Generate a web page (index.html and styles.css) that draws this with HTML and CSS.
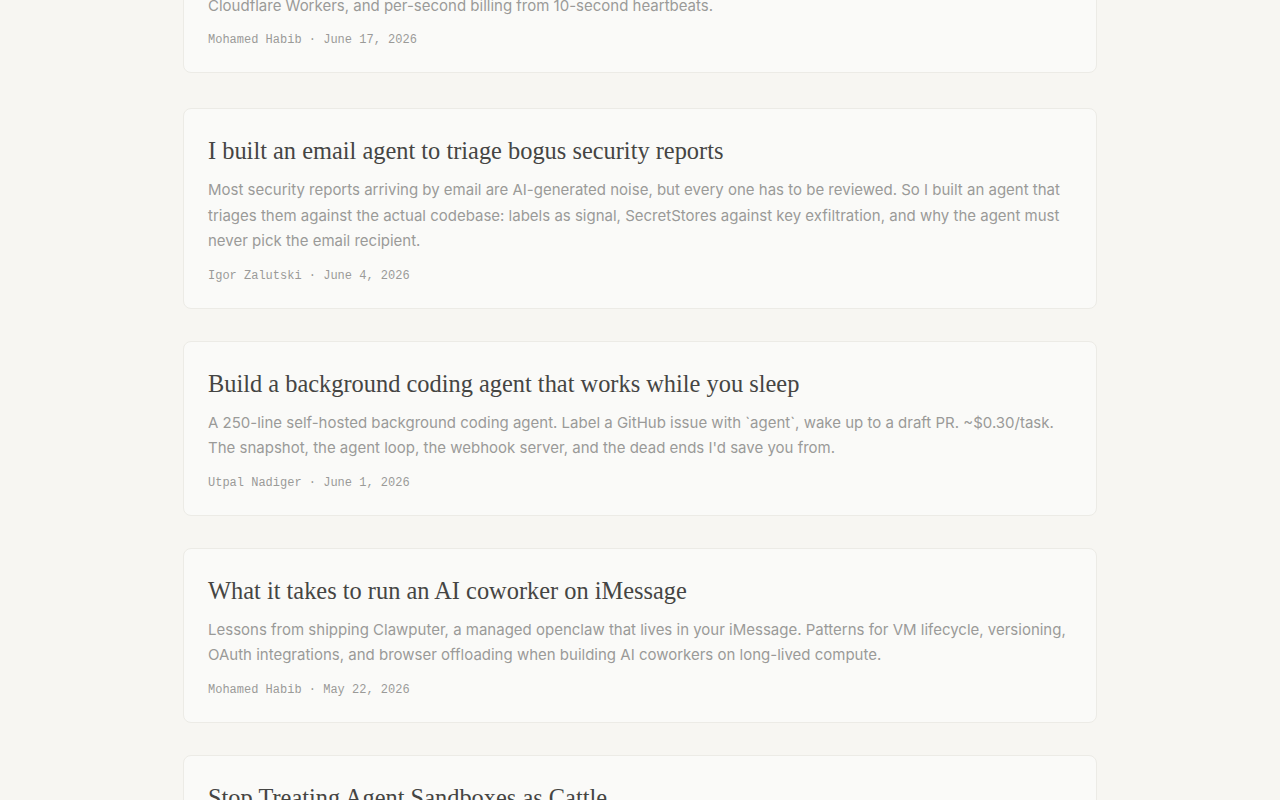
FILE: index.html
```html
<!DOCTYPE html>
<html lang="en">
<head>
<meta charset="utf-8">
<title>Blog</title>
<link rel="stylesheet" href="styles.css">
</head>
<body>
<main class="feed">
  <article class="card">
    <h2 class="title">Per-second billing for sandboxes on the edge</h2>
    <p class="desc">How we metered long-running sandboxes with Durable Objects, a usage pipeline on<br>Cloudflare Workers, and per-second billing from 10-second heartbeats.</p>
    <p class="meta">Mohamed Habib · June 17, 2026</p>
  </article>
  <article class="card">
    <h2 class="title">I built an email agent to triage bogus security reports</h2>
    <p class="desc">Most security reports arriving by email are AI-generated noise, but every one has to be reviewed. So I built an agent that triages them against the actual codebase: labels as signal, SecretStores against key exfiltration, and why the agent must never pick the email recipient.</p>
    <p class="meta">Igor Zalutski · June 4, 2026</p>
  </article>
  <article class="card">
    <h2 class="title">Build a background coding agent that works while you sleep</h2>
    <p class="desc">A 250-line self-hosted background coding agent. Label a GitHub issue with `agent`, wake up to a draft PR. ~$0.30/task. The snapshot, the agent loop, the webhook server, and the dead ends I'd save you from.</p>
    <p class="meta">Utpal Nadiger · June 1, 2026</p>
  </article>
  <article class="card">
    <h2 class="title">What it takes to run an AI coworker on iMessage</h2>
    <p class="desc">Lessons from shipping Clawputer, a managed openclaw that lives in your iMessage. Patterns for VM lifecycle, versioning, OAuth integrations, and browser offloading when building AI coworkers on long-lived compute.</p>
    <p class="meta">Mohamed Habib · May 22, 2026</p>
  </article>
  <article class="card">
    <h2 class="title">Stop Treating Agent Sandboxes as Cattle</h2>
    <p class="desc">Agent sandboxes are long-lived, stateful and personal. Treating them as disposable infrastructure breaks the agent experience.</p>
    <p class="meta">Igor Zalutski · May 15, 2026</p>
  </article>
</main>
</body>
</html>
```

FILE: styles.css
```css
html, body {
  margin: 0;
  padding: 0;
  background: #f7f6f2;
}
.feed {
  width: 914px;
  margin: -102px auto 0;
  display: flex;
  flex-direction: column;
  gap: 32px;
}
.card {
  background: #fafaf8;
  border: 1px solid #ecebe6;
  border-radius: 8px;
  padding: 27px 24px 23px 24px;
}
.card:first-child {
  margin-bottom: 3px;
}
.title {
  margin: 0;
  font-family: "Liberation Serif", "DejaVu Serif", serif;
  font-weight: 400;
  font-size: 24.4px;
  line-height: 30px;
  color: #454543;
}
.desc {
  margin: 11px 0 0;
  font-family: Inter, "Noto Sans", sans-serif;
  font-size: 15px;
  line-height: 25.5px;
  color: #9a9a98;
}
.meta {
  margin: 13px 0 0;
  font-family: "Liberation Mono", "DejaVu Sans Mono", monospace;
  font-size: 12px;
  line-height: 18px;
  color: #9a9a98;
}
```
